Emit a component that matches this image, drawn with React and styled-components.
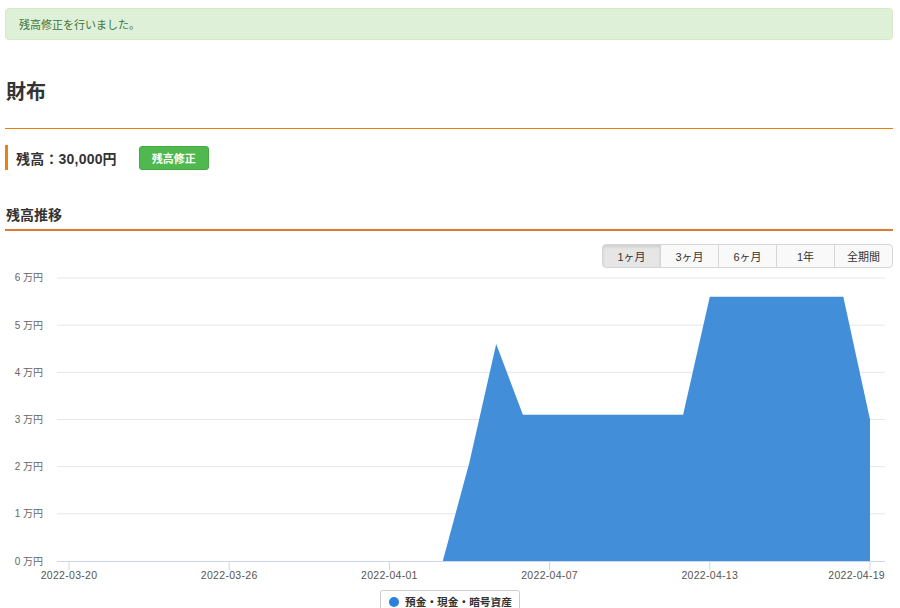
import React from "react";
import styled, { createGlobalStyle } from "styled-components";

const Global = createGlobalStyle`
  html, body { margin: 0; padding: 0; background: #fff; }
  body {
    font-family: "Liberation Sans", "Noto Sans CJK JP", sans-serif;
    color: #333;
    overflow: hidden;
  }
`;

const Page = styled.div`
  padding: 8px 7px 0 5px;
  width: 888px;
`;

const Alert = styled.div`
  box-sizing: border-box;
  height: 32px;
  display: flex;
  align-items: center;
  padding-left: 13px;
  background: #dff0d8;
  border: 1px solid #d6e9c6;
  border-radius: 4px;
  color: #3c763d;
  font-size: 11px;
`;

const Title = styled.h1`
  margin: 32px 0 0;
  padding: 0 0 16px 1px;
  height: 40px;
  line-height: 40px;
  font-size: 20px;
  font-weight: bold;
  color: #333;
  border-bottom: 1px solid #e8820f;
`;

const BalanceRow = styled.div`
  margin-top: 16px;
  height: 25px;
  display: flex;
  align-items: center;
  gap: 22px;
  border-left: 3px solid #e8820f;
  padding-left: 8px;
`;

const BalanceText = styled.span`
  font-size: 14px;
  font-weight: 600;
  letter-spacing: 0.2px;
  color: #333;
`;

const EditButton = styled.button`
  box-sizing: border-box;
  width: 70px;
  height: 24px;
  margin-top: 1px;
  background: #4fb94f;
  border: 1px solid #46a946;
  border-radius: 3px;
  color: #fff;
  font-family: inherit;
  font-size: 11px;
  font-weight: bold;
  padding: 0;
`;

const SectionHeading = styled.h2`
  margin: 34px 0 0;
  padding: 0 0 3px 1px;
  line-height: 22px;
  font-size: 14px;
  font-weight: bold;
  color: #333;
  border-bottom: 2px solid #dc7a36;
`;

const RangeGroup = styled.div`
  margin-top: 13px;
  display: flex;
  justify-content: flex-end;
`;

const RangeButton = styled.button`
  box-sizing: border-box;
  width: 59px;
  height: 24px;
  margin-left: -1px;
  padding: 0;
  font-family: inherit;
  font-size: 11px;
  color: #333;
  background: ${(p) => (p.$active ? "#e6e6e6" : "#f9f9f9")};
  box-shadow: ${(p) => (p.$active ? "inset 0 2px 3px rgba(0,0,0,0.1)" : "none")};
  border: 1px solid #d6d6d6;
  border-radius: 0;
  &:first-child { border-radius: 4px 0 0 4px; margin-left: 0; }
  &:last-child { border-radius: 0 4px 4px 0; }
`;

const ChartSvg = styled.svg`
  display: block;
  width: 888px;
  height: 340px;
  font-family: "Liberation Sans", "Noto Sans CJK JP", sans-serif;
`;

const OX = 5;
const OY = 268;
const yOf = (v) => 561 - v * 47.17 - OY;
const dayX = (d) => 69 + d * 26.7 - OX;

const points = [
  [14, 0], [15, 2.1], [16, 4.6], [17, 3.1], [23, 3.1], [24, 5.6], [29, 5.6], [30, 3.0],
];

function Chart() {
  const path =
    points.map(([d, v], i) => `${i ? "L" : "M"}${dayX(d).toFixed(1)},${yOf(v).toFixed(1)}`).join(" ") +
    ` L${dayX(30).toFixed(1)},${yOf(0)} Z`;
  const xLabels = ["2022-03-20", "2022-03-26", "2022-04-01", "2022-04-07", "2022-04-13", "2022-04-19"];
  return (
    <ChartSvg viewBox="0 0 888 340">
      {[0, 1, 2, 3, 4, 5, 6].map((v) => (
        <g key={v}>
          {v > 0 && (
            <line x1={57 - OX} x2={885 - OX} y1={yOf(v)} y2={yOf(v)} stroke="#e6e6e6" strokeWidth="1" />
          )}
          <text x={43 - OX} y={yOf(v) + 3.5} fontSize="10" fill="#666" textAnchor="end">
            {v} 万円
          </text>
        </g>
      ))}
      <path d={path} fill="#428ed9" />
      <line x1={57 - OX} x2={885 - OX} y1={yOf(0) + 0.5} y2={yOf(0) + 0.5} stroke="#ccd6eb" strokeWidth="1" />
      {xLabels.map((l, i) => {
        const x = dayX(i * 6);
        const last = i === xLabels.length - 1;
        return (
          <g key={l}>
            <line x1={x} x2={x} y1={yOf(0)} y2={yOf(0) + 9} stroke="#ccd6eb" strokeWidth="1" />
            <text
              x={last ? 885 - OX : x}
              y={yOf(0) + 18}
              fontSize="10.5"
              letterSpacing="0.3"
              fill="#555"
              textAnchor={last ? "end" : "middle"}
            >
              {l}
            </text>
          </g>
        );
      })}
      <g>
        <rect x={380.5 - OX} y={590.5 - OY} width="139" height="30" rx="2" fill="#fff" stroke="#ccc" />
        <circle cx={394 - OX} cy={602 - OY} r="5" fill="#2d7fde" />
        <text x={405 - OX} y={606 - OY} fontSize="10.7" fontWeight="bold" fill="#333">
          預金・現金・暗号資産
        </text>
      </g>
    </ChartSvg>
  );
}

export default function App() {
  const ranges = ["1ヶ月", "3ヶ月", "6ヶ月", "1年", "全期間"];
  return (
    <>
      <Global />
      <Page>
        <Alert>残高修正を行いました。</Alert>
        <Title>財布</Title>
        <BalanceRow>
          <BalanceText>残高：30,000円</BalanceText>
          <EditButton>残高修正</EditButton>
        </BalanceRow>
        <SectionHeading>残高推移</SectionHeading>
        <RangeGroup>
          {ranges.map((r, i) => (
            <RangeButton key={r} $active={i === 0}>
              {r}
            </RangeButton>
          ))}
        </RangeGroup>
        <Chart />
      </Page>
    </>
  );
}
